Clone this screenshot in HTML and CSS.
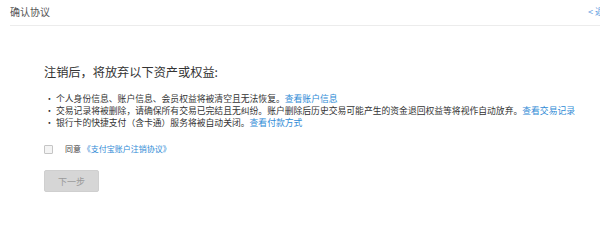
FILE: index.html
```html
<!DOCTYPE html>
<html lang="zh-CN">
<head>
<meta charset="utf-8">
<title>确认协议</title>
<link rel="stylesheet" href="styles.css">
</head>
<body>
<div class="topbar">
  <span class="title">确认协议</span>
  <a class="back" href="#">&lt; 返回</a>
</div>
<div class="content">
  <h2 class="heading">注销后，将放弃以下资产或权益:</h2>
  <ul class="items">
    <li>个人身份信息、账户信息、会员权益将被清空且无法恢复。<a href="#">查看账户信息</a></li>
    <li>交易记录将被删除，请确保所有交易已完结且无纠纷。账户删除后历史交易可能产生的资金退回权益等将视作自动放弃。<a href="#">查看交易记录</a></li>
    <li>银行卡的快捷支付（含卡通）服务将被自动关闭。<a href="#">查看付款方式</a></li>
  </ul>
  <label class="agree">
    <span class="box"></span>
    <span class="agree-text">同意 <a href="#">《支付宝账户注销协议》</a></span>
  </label>
  <button class="next" type="button">下一步</button>
</div>
</body>
</html>
```

FILE: styles.css
```css
html, body {
  margin: 0;
  padding: 0;
  background: #fff;
  overflow: hidden;
}
body {
  font-family: "Noto Sans CJK SC", "Noto Sans", sans-serif;
  color: #333;
}
a {
  color: #2f8bd6;
  text-decoration: none;
}
.topbar {
  margin-left: 10px;
  margin-right: -40px;
  height: 25px;
  border-bottom: 1px solid #ececec;
  display: flex;
  align-items: center;
  justify-content: space-between;
}
.title {
  font-size: 10px;
  color: #555;
  line-height: 12px;
  margin-top: -2px;
}
.back {
  font-size: 9px;
  color: #5b9be0;
  margin-top: -2px;
  width: 52px;
}
.content {
  padding-left: 44px;
  padding-top: 38px;
  display: flex;
  flex-direction: column;
  align-items: flex-start;
}
.heading {
  margin: 0;
  font-size: 12.2px;
  font-weight: normal;
  line-height: 16px;
  color: #333;
}
.items {
  list-style: none;
  margin: 13px 0 0 0;
  padding: 0;
  font-size: 8.8px;
  line-height: 12px;
  color: #333;
}
.items li {
  display: flex;
}
.items li::before {
  content: "•";
  width: 11px;
  flex-shrink: 0;
  padding-left: 1px;
  color: #333;
}
.agree {
  margin-top: 15px;
  display: flex;
  align-items: center;
  font-size: 8px;
  line-height: 10px;
  color: #444;
}
.box {
  width: 7px;
  height: 7px;
  border: 1px solid #c5c5c5;
  border-radius: 1px;
  background: #f4f4f4;
  margin-right: 12px;
}
.next {
  margin-top: 16px;
  width: 55px;
  height: 22px;
  border: 1px solid #cfcfcf;
  border-radius: 2px;
  background: #d6d6d6;
  color: #9a9a9a;
  font-family: "Noto Sans CJK SC", sans-serif;
  font-size: 9px;
  padding: 0;
}
```
